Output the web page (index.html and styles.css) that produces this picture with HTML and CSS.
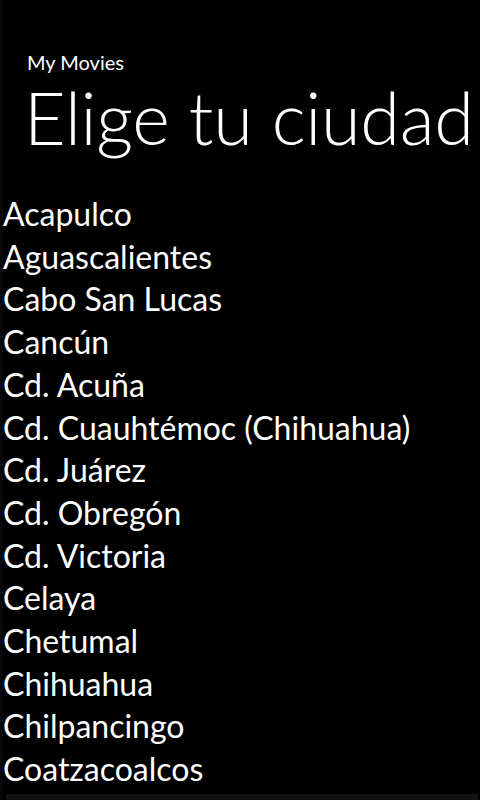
FILE: index.html
```html
<!DOCTYPE html>
<html lang="es">
<head>
<meta charset="utf-8">
<title>My Movies</title>
<link rel="stylesheet" href="styles.css">
</head>
<body>
<div class="page">
  <div class="edge"></div>
  <main class="content">
    <header class="header">
      <div class="app-title">My Movies</div>
      <h1 class="page-title">Elige tu ciudad</h1>
    </header>
    <ul class="cities">
      <li>Acapulco</li>
      <li>Aguascalientes</li>
      <li>Cabo San Lucas</li>
      <li>Cancún</li>
      <li>Cd. Acuña</li>
      <li>Cd. Cuauhtémoc (Chihuahua)</li>
      <li>Cd. Juárez</li>
      <li>Cd. Obregón</li>
      <li>Cd. Victoria</li>
      <li>Celaya</li>
      <li>Chetumal</li>
      <li>Chihuahua</li>
      <li>Chilpancingo</li>
      <li>Coatzacoalcos</li>
    </ul>
  </main>
  <div class="scroll-hint"></div>
</div>
</body>
</html>
```

FILE: styles.css
```css
html, body {
  margin: 0;
  padding: 0;
  background: #000;
  height: 100%;
  overflow: hidden;
}
body {
  font-family: Lato, "Open Sans", sans-serif;
  color: #fff;
}
.page {
  display: flex;
  height: 800px;
  width: 480px;
  overflow: hidden;
  position: relative;
}
.edge {
  width: 3px;
  flex: none;
  background: #080808;
}
.content {
  flex: 1;
}
.header {
  padding: 50px 0 0 24px;
}
.app-title {
  font-size: 20px;
  line-height: 24px;
}
.page-title {
  margin: 3px 0 0 -3px;
  font-size: 72px;
  font-weight: 300;
  line-height: 80px;
  letter-spacing: -0.3px;
  white-space: nowrap;
}
.cities {
  list-style: none;
  margin: 36px 0 0 0;
  padding: 0;
}
.cities li {
  font-size: 32px;
  line-height: 42.7px;
  white-space: nowrap;
}
.scroll-hint {
  position: absolute;
  left: 6px;
  right: 2px;
  bottom: 0;
  height: 6px;
  background: #121212;
}
```
